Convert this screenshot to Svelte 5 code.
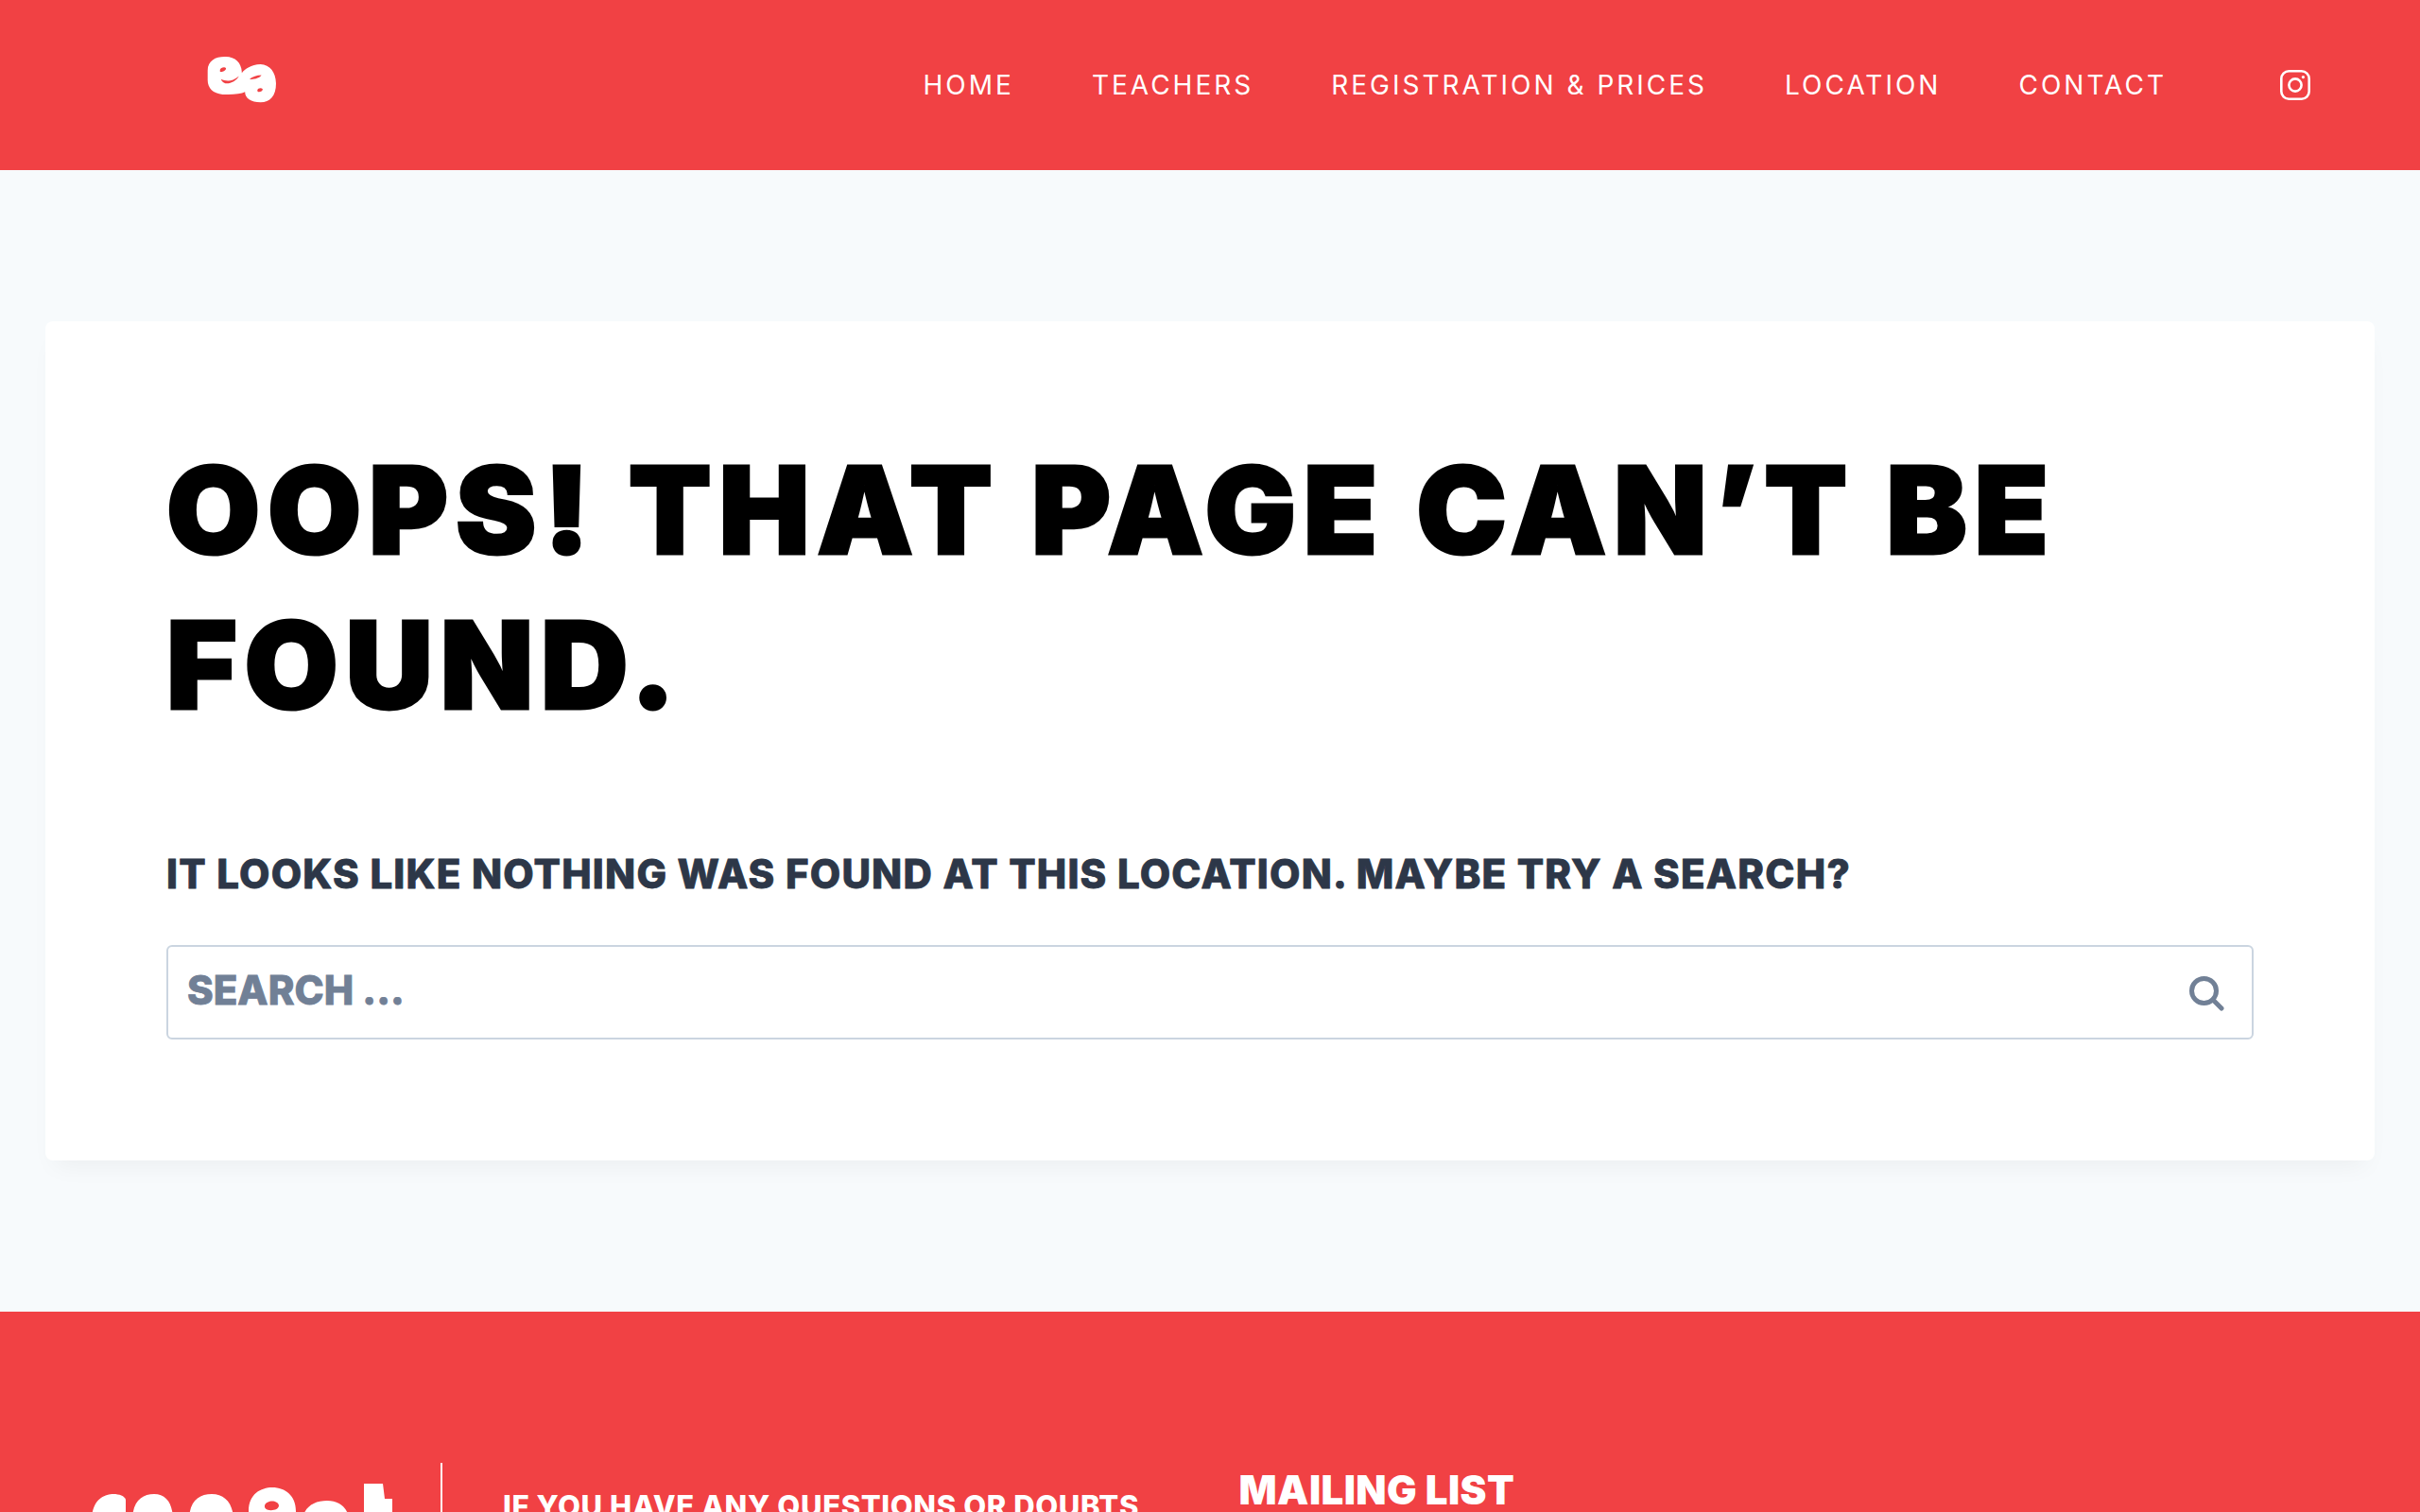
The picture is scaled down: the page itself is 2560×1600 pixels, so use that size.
<script lang="ts">
  const links = ["Home", "Teachers", "Registration & Prices", "Location", "Contact"];
</script>

<div class="page">
  <header class="site-header">
    <a class="logo" href="#home" aria-label="Home">
      <svg viewBox="170 115 230 155" width="77" height="52">
        <path
          fill="#fff"
          fill-rule="evenodd"
          d="M178 165C178 132 205 120 235 121C265 122 285 138 286 172C296 160 315 146 345 145C375 146 393 170 394 205C394 245 375 265 345 265C315 265 296 252 296 232C280 240 255 240 225 240C195 238 178 220 178 195ZM217 162C219 155 232 152 236 158C235 166 223 170 217 168ZM220 192C232 197 245 199 258 194C266 190 272 186 277 182C268 198 250 207 234 205C227 203 222 198 220 192ZM310 192C320 184 332 179 348 179C344 187 325 194 310 192ZM335 226C337 219 348 218 352 223C352 231 341 234 336 231Z"
        />
      </svg>
    </a>
    <nav class="main-nav">
      {#each links as link}
        <a href="#nav">{link}</a>
      {/each}
    </nav>
    <a class="social" href="#instagram" aria-label="Instagram">
      <svg viewBox="0 0 32 32" width="32" height="32" fill="none" stroke="#fff" stroke-width="2.6">
        <rect x="1.3" y="1.3" width="29.4" height="29.4" rx="8" />
        <circle cx="16" cy="16" r="6.6" />
        <circle cx="24.4" cy="7.6" r="1.6" fill="#fff" stroke="none" />
      </svg>
    </a>
  </header>

  <main class="content">
    <section class="card">
      <h1>Oops! That page can’t be found.</h1>
      <p>It looks like nothing was found at this location. Maybe try a search?</p>
      <form class="search" onsubmit={(e) => e.preventDefault()}>
        <input type="search" placeholder="Search ..." aria-label="Search" />
        <svg viewBox="0 0 37 37" width="37" height="37" fill="none" stroke="#718096" stroke-width="5" stroke-linecap="round">
          <circle cx="15.5" cy="15.5" r="13" />
          <path d="M25 25l9 9" />
        </svg>
      </form>
    </section>
  </main>

  <footer class="site-footer">
    <div class="footer-logo">
      <svg viewBox="0 0 322 60" width="322" height="60" fill="#fff">
        <path d="M1 40C1 18 14 12 24 12C30 12 36 14 37 18V60H1Z" />
        <path fill-rule="evenodd" d="M44 40C44 20 54 12 67 12C80 12 87 22 87 40V60H44ZM62 36C62 30 72 30 72 36V60H62Z" />
        <path fill-rule="evenodd" d="M104 40C104 20 114 12 128 12C142 12 151 22 151 40V60H104ZM122 36C122 30 133 30 133 36V60H122Z" />
        <path fill-rule="evenodd" d="M167 30C167 12 180 5 192 5C206 5 217 14 217 30V60H167ZM184 24C186 18 198 18 199 24C199 30 186 31 184 26Z" />
        <path d="M224 42C224 26 236 19 250 19C264 19 274 28 274 44V60H224Z" />
        <path d="M289 1H309L311 17H319V60H289Z" />
      </svg>
    </div>
    <div class="footer-note">
      <h3>If you have any questions or doubts,</h3>
    </div>
    <div class="footer-mail">
      <h2>Mailing list</h2>
    </div>
  </footer>
</div>

<style>
  :global(body) {
    margin: 0;
    background: #f7fafc;
  }

  .page {
    height: 1600px;
    overflow: hidden;
    display: flex;
    flex-direction: column;
    font-family: Inter, "Liberation Sans", sans-serif;
  }

  .site-header {
    flex: none;
    height: 180px;
    box-sizing: border-box;
    background: #f14144;
    display: flex;
    align-items: center;
    padding: 0 116px 0 217px;
  }

  .logo {
    display: block;
    height: 52px;
    margin-top: -12px;
  }

  .main-nav {
    margin-left: auto;
    display: flex;
    gap: 82px;
  }

  .main-nav a {
    color: #fff;
    text-decoration: none;
    text-transform: uppercase;
    font-size: 28px;
    line-height: 34px;
    letter-spacing: 3px;
  }

  .social {
    display: block;
    height: 32px;
    margin-left: 120px;
  }

  .content {
    flex: none;
    padding: 160px 48px;
  }

  .card {
    height: 888px;
    box-sizing: border-box;
    background: #fff;
    border-radius: 8px;
    box-shadow: 0 15px 25px -10px rgba(0, 0, 0, 0.05);
    padding: 118px 128px 0;
  }

  h1 {
    margin: 0 0 107px;
    color: #000;
    font-size: 128px;
    line-height: 164px;
    font-weight: 900;
    letter-spacing: 7.8px;
    -webkit-text-stroke: 3px #000;
    text-transform: uppercase;
  }

  p {
    margin: 0 0 43px;
    color: #2d3748;
    font-size: 42px;
    line-height: 64px;
    font-weight: 800;
    letter-spacing: 1.2px;
    -webkit-text-stroke: 0.8px #2d3748;
    text-transform: uppercase;
  }

  .search {
    position: relative;
    height: 100px;
  }

  .search input {
    width: 100%;
    height: 100%;
    box-sizing: border-box;
    border: 2px solid #cbd5e0;
    border-radius: 6px;
    padding: 0 20px 6px;
    background: #fff;
    outline: none;
    color: #2d3748;
    font-family: inherit;
    font-size: 42px;
    font-weight: 800;
    text-transform: uppercase;
  }

  .search input::placeholder {
    color: #718096;
    opacity: 1;
    -webkit-text-stroke: 0.8px #718096;
  }

  .search svg {
    position: absolute;
    right: 31px;
    top: 33px;
  }

  .site-footer {
    flex: 1;
    min-height: 0;
    background: #f14144;
    display: flex;
    align-items: flex-start;
    padding-top: 160px;
    color: #fff;
    overflow: hidden;
  }

  .footer-logo {
    flex: none;
    width: 468px;
    height: 52px;
    box-sizing: border-box;
    padding: 21px 0 0 96px;
    border-right: 2px solid #fff;
    margin-right: 64px;
  }

  .footer-logo svg {
    display: block;
  }

  h3 {
    margin: 26px 0 0;
    font-size: 31px;
    line-height: 40px;
    font-weight: 800;
    letter-spacing: 0.6px;
    white-space: nowrap;
    text-transform: uppercase;
  }

  .footer-mail {
    margin-left: 94px;
  }

  h2 {
    margin: 8px 0 0;
    font-size: 42px;
    line-height: 42px;
    font-weight: 900;
    letter-spacing: 0.4px;
    white-space: nowrap;
    text-transform: uppercase;
  }
</style>
